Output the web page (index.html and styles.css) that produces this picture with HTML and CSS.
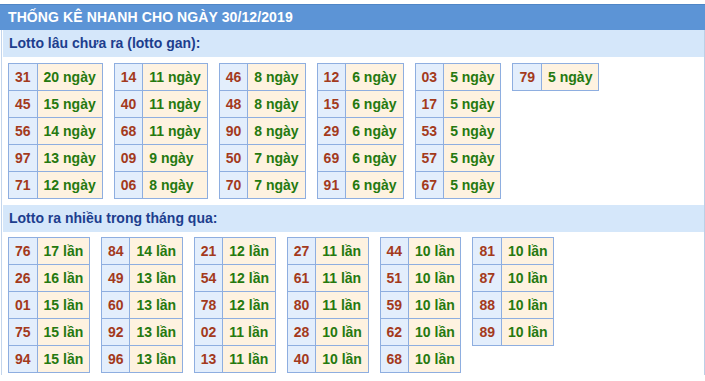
FILE: index.html
```html
<!DOCTYPE html>
<html lang="vi">
<head>
<meta charset="utf-8">
<link rel="stylesheet" href="styles.css">
</head>
<body>
<div class="wrap">
  <div class="head">THỐNG KÊ NHANH CHO NGÀY 30/12/2019</div>
  <div class="box">
    <div class="sec-title">Lotto lâu chưa ra (lotto gan):</div>
    <div class="tables">
      <table><tr><td class="n">31</td><td class="t">20 ngày</td></tr><tr><td class="n">45</td><td class="t">15 ngày</td></tr><tr><td class="n">56</td><td class="t">14 ngày</td></tr><tr><td class="n">97</td><td class="t">13 ngày</td></tr><tr><td class="n">71</td><td class="t">12 ngày</td></tr></table>
      <table><tr><td class="n">14</td><td class="t">11 ngày</td></tr><tr><td class="n">40</td><td class="t">11 ngày</td></tr><tr><td class="n">68</td><td class="t">11 ngày</td></tr><tr><td class="n">09</td><td class="t">9 ngày</td></tr><tr><td class="n">06</td><td class="t">8 ngày</td></tr></table>
      <table><tr><td class="n">46</td><td class="t">8 ngày</td></tr><tr><td class="n">48</td><td class="t">8 ngày</td></tr><tr><td class="n">90</td><td class="t">8 ngày</td></tr><tr><td class="n">50</td><td class="t">7 ngày</td></tr><tr><td class="n">70</td><td class="t">7 ngày</td></tr></table>
      <table><tr><td class="n">12</td><td class="t">6 ngày</td></tr><tr><td class="n">15</td><td class="t">6 ngày</td></tr><tr><td class="n">29</td><td class="t">6 ngày</td></tr><tr><td class="n">69</td><td class="t">6 ngày</td></tr><tr><td class="n">91</td><td class="t">6 ngày</td></tr></table>
      <table><tr><td class="n">03</td><td class="t">5 ngày</td></tr><tr><td class="n">17</td><td class="t">5 ngày</td></tr><tr><td class="n">53</td><td class="t">5 ngày</td></tr><tr><td class="n">57</td><td class="t">5 ngày</td></tr><tr><td class="n">67</td><td class="t">5 ngày</td></tr></table>
      <table><tr><td class="n">79</td><td class="t">5 ngày</td></tr></table>
    </div>
    <div class="sec-title second">Lotto ra nhiều trong tháng qua:</div>
    <div class="tables tables-2">
      <table><tr><td class="n">76</td><td class="t">17 lần</td></tr><tr><td class="n">26</td><td class="t">16 lần</td></tr><tr><td class="n">01</td><td class="t">15 lần</td></tr><tr><td class="n">75</td><td class="t">15 lần</td></tr><tr><td class="n">94</td><td class="t">15 lần</td></tr></table>
      <table><tr><td class="n">84</td><td class="t">14 lần</td></tr><tr><td class="n">49</td><td class="t">13 lần</td></tr><tr><td class="n">60</td><td class="t">13 lần</td></tr><tr><td class="n">92</td><td class="t">13 lần</td></tr><tr><td class="n">96</td><td class="t">13 lần</td></tr></table>
      <table><tr><td class="n">21</td><td class="t">12 lần</td></tr><tr><td class="n">54</td><td class="t">12 lần</td></tr><tr><td class="n">78</td><td class="t">12 lần</td></tr><tr><td class="n">02</td><td class="t">11 lần</td></tr><tr><td class="n">13</td><td class="t">11 lần</td></tr></table>
      <table><tr><td class="n">27</td><td class="t">11 lần</td></tr><tr><td class="n">61</td><td class="t">11 lần</td></tr><tr><td class="n">80</td><td class="t">11 lần</td></tr><tr><td class="n">28</td><td class="t">10 lần</td></tr><tr><td class="n">40</td><td class="t">10 lần</td></tr></table>
      <table><tr><td class="n">44</td><td class="t">10 lần</td></tr><tr><td class="n">51</td><td class="t">10 lần</td></tr><tr><td class="n">59</td><td class="t">10 lần</td></tr><tr><td class="n">62</td><td class="t">10 lần</td></tr><tr><td class="n">68</td><td class="t">10 lần</td></tr></table>
      <table><tr><td class="n">81</td><td class="t">10 lần</td></tr><tr><td class="n">87</td><td class="t">10 lần</td></tr><tr><td class="n">88</td><td class="t">10 lần</td></tr><tr><td class="n">89</td><td class="t">10 lần</td></tr></table>
    </div>
  </div>
</div>
</body>
</html>
```
FILE: styles.css
```css
html, body {
  margin: 0;
  padding: 0;
  background: #ffffff;
}
body {
  font-family: "Liberation Sans", Arial, sans-serif;
  font-size: 14px;
  font-weight: bold;
}
.wrap {
  width: 705px;
  padding-top: 4px;
}
.head {
  height: 26px;
  line-height: 25px;
  border-top: 1px solid #4f86c6;
  background: #5c94d6;
  color: #ffffff;
  padding-left: 8px;
  box-sizing: border-box;
  letter-spacing: 0.1px;
}
.box {
  border-left: 1px solid #c3d5ec;
  border-right: 1px solid #bccfe6;
  margin-left: 1px;
  padding-bottom: 2px;
}
.sec-title {
  height: 27px;
  line-height: 27px;
  background: #d5e7fa;
  color: #1d3e8e;
  padding-left: 6px;
  margin-left: 1px;
}
.sec-title.second {
  margin-top: 6px;
}
.tables {
  display: flex;
  align-items: flex-start;
  gap: 11px;
  padding: 6px 0 0 6px;
}
.tables-2 {
  padding-top: 5px;
}
table {
  border-collapse: collapse;
}
td {
  border: 1px solid #8eaee0;
  height: 26px;
  padding: 0 6px;
  line-height: 26px;
  white-space: nowrap;
}
td.n {
  background: #e3eefc;
  color: #a33a1c;
  text-align: center;
}
td.t {
  background: #fef2e0;
  color: #25790f;
}
.tables-2 td.t {
  padding: 0 5.6px 0 6px;
}
```
